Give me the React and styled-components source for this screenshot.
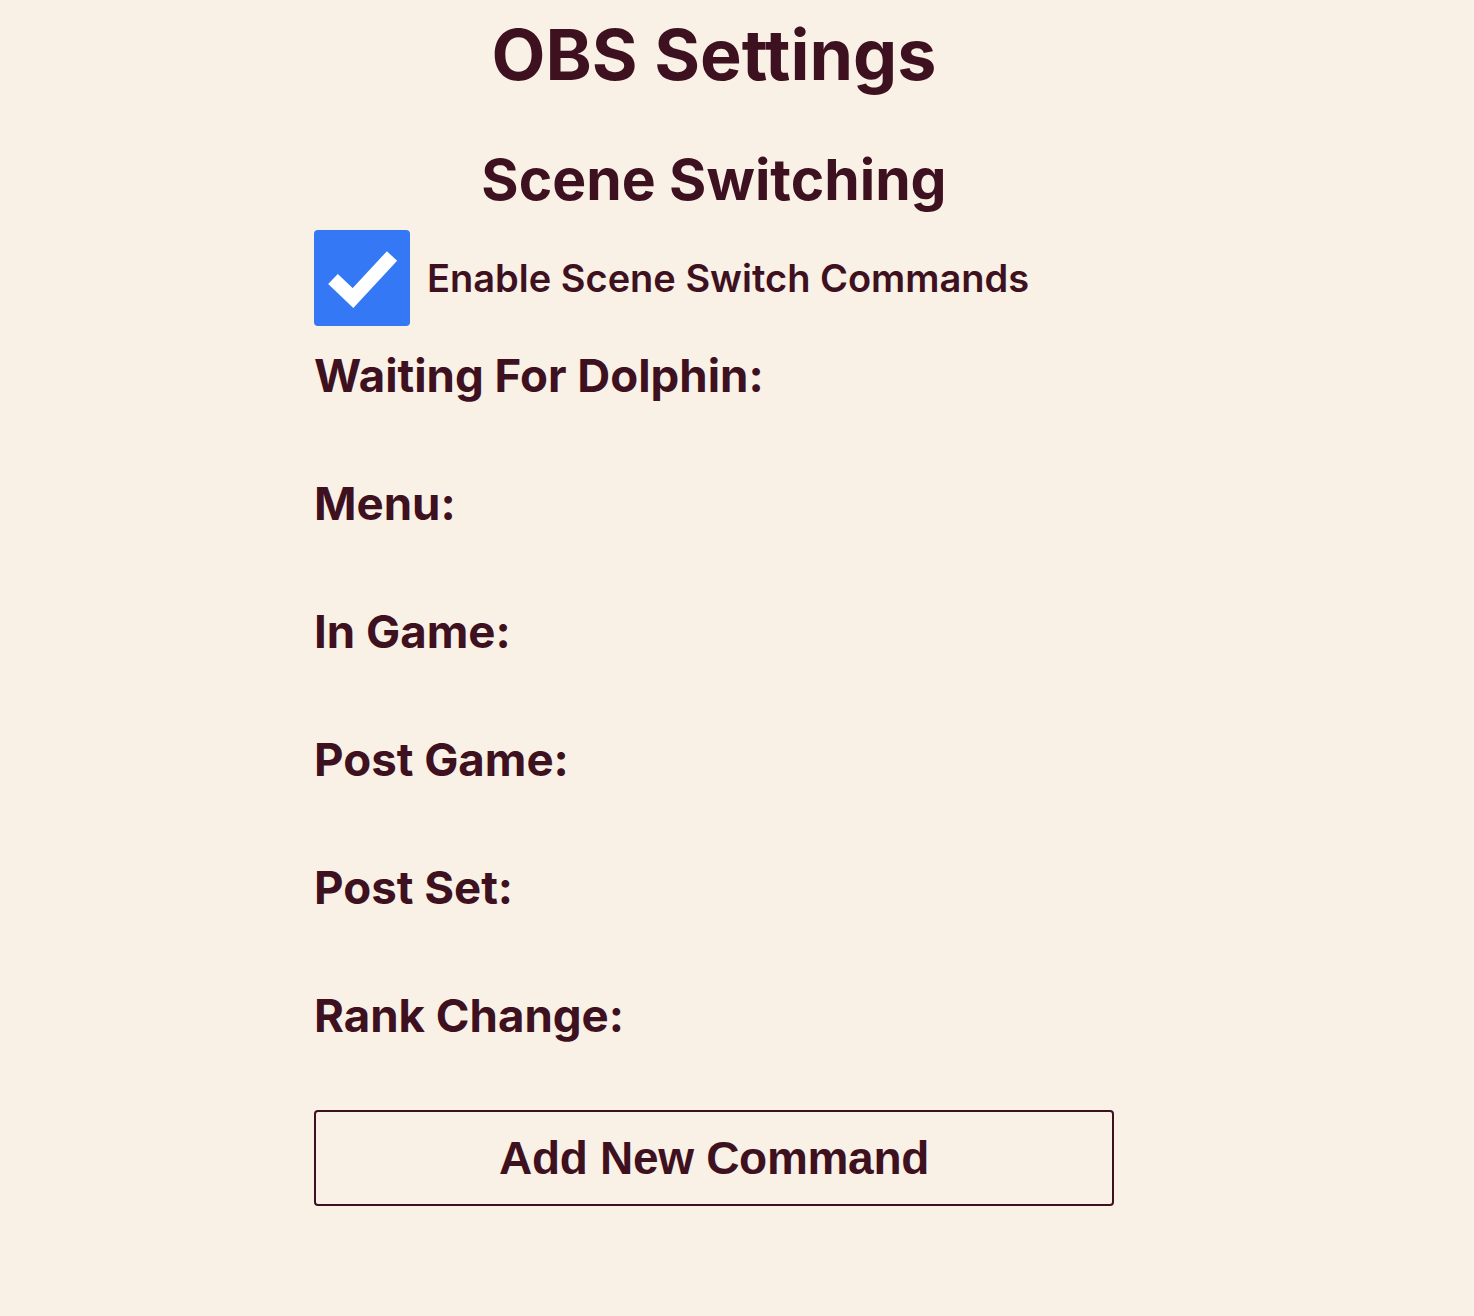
import React from "react";
import styled, { createGlobalStyle } from "styled-components";

const Global = createGlobalStyle`
  html, body { margin: 0; padding: 0; background: #f9f0e6; }
  body { font-family: Inter, "Noto Sans", sans-serif; color: #3e1120; }
`;

const Page = styled.div`
  display: flex;
  justify-content: center;
  padding: 0 46px 40px 0;
  min-height: 1316px;
  box-sizing: border-box;
`;

const Column = styled.div`
  width: 800px;
  display: flex;
  flex-direction: column;
`;

const Title = styled.h1`
  margin: 15px 0 0;
  text-align: center;
  font-size: 70px;
  font-weight: 700;
  line-height: 80px;
`;

const Subtitle = styled.h2`
  margin: 52px 0 0;
  text-align: center;
  font-size: 57px;
  font-weight: 700;
  line-height: 66px;
`;

const CheckRow = styled.label`
  display: flex;
  align-items: center;
  gap: 17px;
  margin-top: 17px;
  font-size: 38px;
  font-weight: 600;
`;

const Box = styled.span`
  width: 96px;
  height: 96px;
  border-radius: 4px;
  background: #3478f6;
  display: flex;
  align-items: center;
  justify-content: center;
  flex-shrink: 0;
`;

const SceneList = styled.div`
  display: flex;
  flex-direction: column;
  margin-top: 22px;
`;

const SceneLabel = styled.div`
  height: 128px;
  font-size: 45.6px;
  font-weight: 700;
  line-height: 56px;
`;

const AddButton = styled.button`
  margin-top: -6px;
  height: 96px;
  width: 800px;
  background: transparent;
  border: 2px solid #3e1120;
  border-radius: 4px;
  color: #3e1120;
  font-family: "Liberation Sans", Arial, sans-serif;
  font-size: 46px;
  font-weight: 700;
  letter-spacing: -0.3px;
  cursor: pointer;
`;

const scenes = [
  "Waiting For Dolphin:",
  "Menu:",
  "In Game:",
  "Post Game:",
  "Post Set:",
  "Rank Change:",
];

export default function App() {
  return (
    <>
      <Global />
      <Page>
        <Column>
          <Title>OBS Settings</Title>
          <Subtitle>Scene Switching</Subtitle>
          <CheckRow>
            <Box>
              <svg width="96" height="96" viewBox="0 0 96 96">
                <path d="M19 49 L39 68 L78 26" fill="none" stroke="#fff" strokeWidth="14" strokeLinecap="butt" strokeLinejoin="miter" />
              </svg>
            </Box>
            Enable Scene Switch Commands
          </CheckRow>
          <SceneList>
            {scenes.map((s) => (
              <SceneLabel key={s}>{s}</SceneLabel>
            ))}
          </SceneList>
          <AddButton>Add New Command</AddButton>
        </Column>
      </Page>
    </>
  );
}
